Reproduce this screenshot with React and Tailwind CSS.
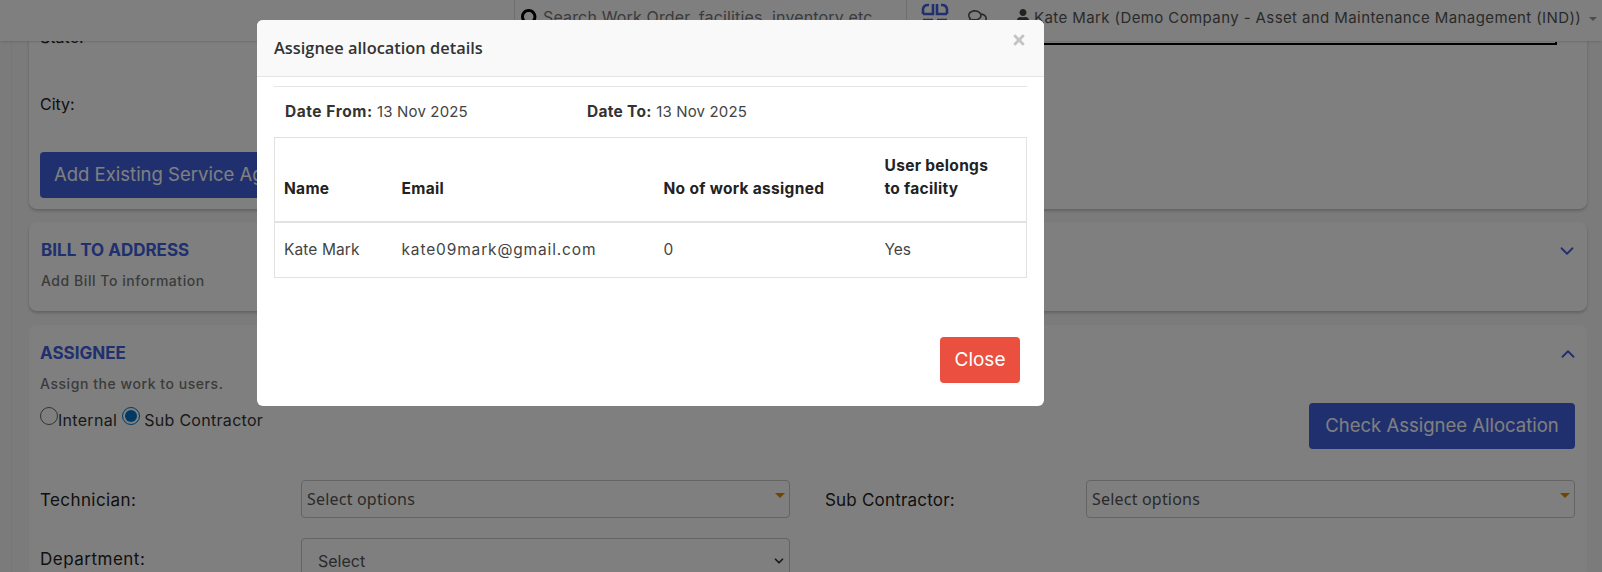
import { ChevronDown, ChevronUp } from 'lucide-react';
import { FaRegComments, FaSearch, FaTimes, FaUser } from 'react-icons/fa';

const bodyFont = 'font-["Inter","Liberation_Sans",sans-serif]';
const thClass = 'pl-[9px] pr-[10px] pb-[21px] text-left align-bottom text-[15.5px] font-bold leading-[23px] tracking-[0.3px] text-[#222]';

function SelectBox({ width }) {
  return (
    <div className={`relative h-[38px] ${width} rounded border border-[#c8c8c8] bg-white pl-[5px] font-["Noto_Sans",sans-serif] text-[16px] leading-[36px] tracking-[0.2px] text-[#555]`}>
      Select options
      <span className="absolute right-[4px] top-[12px] h-0 w-0 border-x-[5px] border-t-[5px] border-x-transparent border-t-[#e08a00]" />
    </div>
  );
}

function SectionHead({ title, note, open }) {
  return (
    <div className="flex items-start justify-between">
      <div>
        <div className="text-[17px] font-bold leading-[20px] text-[#4060de]">{title}</div>
        <div className="mt-[11px] text-[14px] font-medium leading-[20px] tracking-[0.55px] text-[#777]">{note}</div>
      </div>
      {open
        ? <ChevronUp size={22} className="-mr-[2px] text-[#4060de]" />
        : <ChevronDown size={22} className="-mr-[2px] text-[#4060de]" />}
    </div>
  );
}

export default function App() {
  return (
    <div className={`relative flex h-screen flex-col overflow-hidden bg-[#f6f6f6] ${bodyFont} text-[#222]`}>
      {/* Barra superior */}
      <header className="z-10 flex h-[41px] shrink-0 bg-white pl-[514px] shadow-sm">
        <div className="flex h-full w-[393px] items-start gap-[3px] border-x border-[#ddd] pl-[6px] pt-[7px] text-[16px] leading-[20px] tracking-[0.15px] text-[#777]">
          <FaSearch size={19} className="mt-[2px] shrink-0 text-black" />
          <span className="whitespace-nowrap">Search Work Order, facilities, inventory etc</span>
        </div>
        <svg width="28" height="20" viewBox="0 0 28 20" className="ml-[14px] mt-[2px] text-[#4060de]" fill="none" stroke="currentColor" strokeWidth="2.6">
          <path d="M2 12V7a5 5 0 0 1 5-4h1M12 2v10H2" />
          <path d="M26 12V7a5 5 0 0 0-5-4h-1M16 2v10h10" />
          <path d="M2 18h10M16 18h10" />
        </svg>
        <FaRegComments size={19} className="ml-[19px] mt-[8px] text-[#555]" />
        <FaUser size={14} className="ml-[29px] mt-[9px] text-[#444]" />
        <span className="ml-[4px] mt-[8px] whitespace-nowrap text-[15px] leading-[20px] tracking-[0.4px] text-[#555]">
          Kate Mark (Demo Company - Asset and Maintenance Management (IND))
        </span>
        <span className="ml-[8px] mt-[17px] h-0 w-0 border-x-[4px] border-t-[4px] border-x-transparent border-t-[#999]" />
      </header>

      <main className="-mt-[16px] min-h-0 flex-1 overflow-hidden pl-[11px]">
        <div className="border-l border-[#eee] pl-[17px] pr-[15px]">
          {/* Service agent */}
          <section className="relative rounded-b-lg bg-white pb-[11px] pl-[11px] pr-[11px] shadow-[0_2px_3px_rgba(0,0,0,0.2)]">
            <div className="text-[16px] leading-[24px]">State:</div>
            <div className="mt-[43px] text-[16px] leading-[24px]">City:</div>
            <button className="mt-[36px] block h-[46px] w-[300px] rounded bg-[#4060de] pl-[14px] text-left text-[18.5px] text-white">
              Add Existing Service Agent
            </button>
            <div className="absolute left-[1000px] top-[17px] h-[3px] w-[528px] border-b-2 border-r-2 border-black" />
          </section>

          <section className="mt-[13px] h-[89px] rounded-lg bg-white pl-[12px] pr-[11px] pt-[18px] shadow-[0_2px_3px_rgba(0,0,0,0.2)]">
            <SectionHead title="BILL TO ADDRESS" note="Add Bill To information" />
          </section>

          <section className="mt-[14px] rounded-lg bg-white pl-[11px] pr-[10px] pt-[18px]">
            <SectionHead title="ASSIGNEE" note="Assign the work to users." open />
            <div className="flex items-start justify-between">
              <div className="flex items-start pt-[13px] text-[16px] leading-[22px] tracking-[0.3px] text-[#333]">
                <span className="h-[18px] w-[18px] rounded-full border border-[#666] bg-white" />
                <span className="mt-[2px]">Internal</span>
                <span className="ml-[5px] flex h-[18px] w-[18px] items-center justify-center rounded-full border border-[#0075c9] bg-white">
                  <span className="h-[12px] w-[12px] rounded-full bg-[#0075c9]" />
                </span>
                <span className="ml-[4px] mt-[2px]">Sub Contractor</span>
              </div>
              <button className="mr-[2px] mt-[9px] h-[46px] w-[266px] rounded bg-[#4060de] text-[18.5px] text-white">
                Check Assignee Allocation
              </button>
            </div>
            <div className="mt-[31px] flex items-center text-[17px]">
              <span className="w-[261px] pt-[3px] tracking-[0.4px]">Technician:</span>
              <SelectBox width="w-[489px]" />
              <span className="ml-[35px] w-[261px] pt-[3px] tracking-[0.2px]">Sub Contractor:</span>
              <SelectBox width="w-[489px]" />
            </div>
            <div className="mt-[20px] flex items-start text-[17px]">
              <span className="mt-[9px] w-[261px] tracking-[0.5px]">Department:</span>
              <div className="relative h-[38px] w-[489px] rounded border border-[#c8c8c8] bg-white pl-[16px] text-[16px] leading-[44px] text-[#555]">
                Select
                <ChevronDown size={14} strokeWidth={3} className="absolute right-[3px] top-[15px] text-[#333]" />
              </div>
            </div>
          </section>
        </div>
      </main>

      {/* Modal */}
      <div className="absolute inset-0 z-20 bg-black/50 pl-[257px] pt-[20px]">
        <div className="flex h-[386px] w-[787px] flex-col overflow-hidden rounded-md bg-white">
          <div className="flex h-[57px] shrink-0 items-start justify-between border-b border-[#e5e5e5] bg-[#f9f9f9] pl-[17px] pr-[17px]">
            <h2 className='mt-[18px] font-["Open_Sans",sans-serif] text-[16.4px] font-semibold leading-[20px] text-[#333]'>
              Assignee allocation details
            </h2>
            <FaTimes size={16} className="mt-[12px] text-[#c4c4c4]" />
          </div>
          <div className="mx-[17px] mt-[9px] border-t border-[#e5e5e5]" />
          <div className="mt-[14px] flex pl-[28px] text-[15px] leading-[22px] tracking-[0.15px] text-[#444]">
            <div className="w-[302px]"><b className="text-[15.5px] font-bold tracking-[0.55px] text-[#333]">Date From:</b> 13 Nov 2025</div>
            <div><b className="text-[15.5px] font-bold tracking-[0.3px] text-[#333]">Date To:</b> 13 Nov 2025</div>
          </div>
          <table className="mx-[17px] mt-[14px] w-[753px] table-fixed border border-[#e2e2e2] text-[15.5px] text-[#444]">
            <colgroup>
              <col className="w-[118px]" />
              <col className="w-[262px]" />
              <col className="w-[221px]" />
              <col />
            </colgroup>
            <thead>
              <tr className="h-[84px] border-b-2 border-[#e2e2e2]">
                <th className={thClass}>Name</th>
                <th className={thClass}>Email</th>
                <th className={thClass}>No of work assigned</th>
                <th className={thClass}>User belongs<br />to facility</th>
              </tr>
            </thead>
            <tbody>
              <tr className="h-[56px]">
                <td className="pl-[9px] pr-[10px] tracking-[0.1px]">Kate Mark</td>
                <td className="pl-[9px] pr-[10px] tracking-[0.85px]">kate09mark@gmail.com</td>
                <td className="pl-[9px] pr-[10px]">0</td>
                <td className="pl-[9px] pr-[10px]">Yes</td>
              </tr>
            </tbody>
          </table>
          <div className="mt-[59px] flex justify-end pr-[24px]">
            <button className="h-[46px] w-[80px] rounded bg-[#ea4f3f] text-[19px] text-white">Close</button>
          </div>
        </div>
      </div>
    </div>
  );
}
